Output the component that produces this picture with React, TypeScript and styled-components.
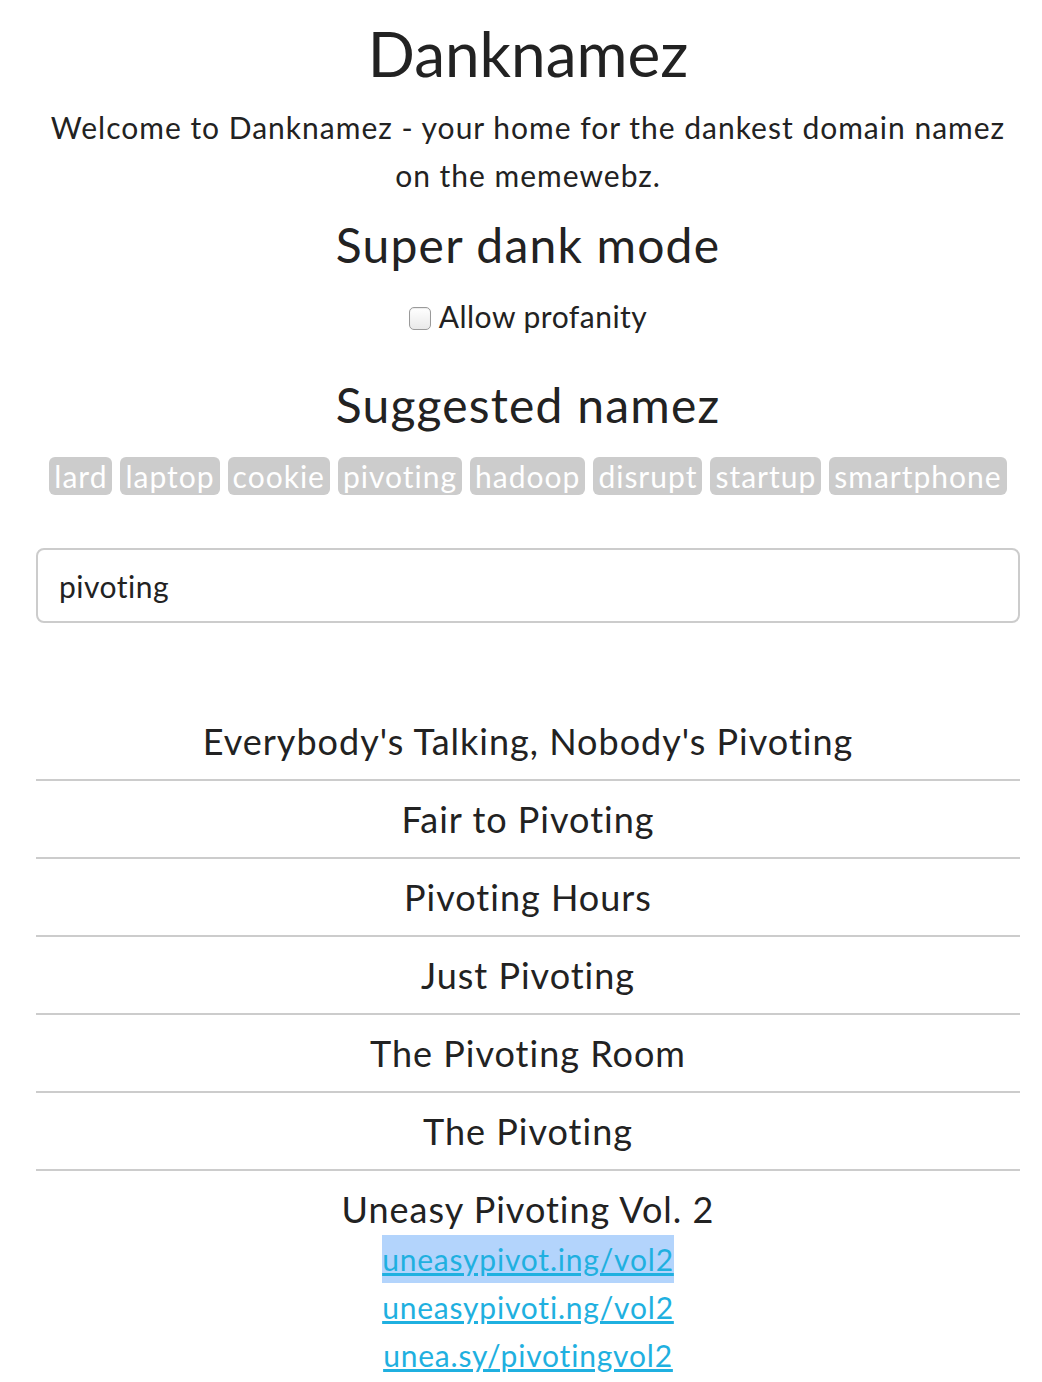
import { useState } from "react";
import styled, { createGlobalStyle } from "styled-components";

const GlobalStyle = createGlobalStyle`
    body {
        margin: 0;
        background: #fff;
        color: #222;
        font-family: Lato, "Liberation Sans", sans-serif;
    }
`

const Page = styled.div`
    padding: 22px 22px 40px 36px;
    text-align: center;
`

const Title = styled.h1`
    font-size: 62px;
    font-weight: 400;
    line-height: 62px;
    margin: 0;
`

const Lead = styled.p`
    font-size: 30px;
    line-height: 48px;
    letter-spacing: 1px;
    margin: 19px 0 0;
`

const Heading = styled.h2<{ gap: number }>`
    font-size: 48px;
    font-weight: 400;
    line-height: 58px;
    letter-spacing: 1.2px;
    margin: ${({ gap }) => gap}px 0 0;
`

const CheckField = styled.div`
    display: flex;
    justify-content: center;
    margin-top: 22px;
`

const CheckRow = styled.label`
    display: inline-flex;
    align-items: center;
    gap: 8px;
    font-size: 30px;
    line-height: 40px;
    letter-spacing: 0.5px;
`

const Box = styled.input`
    appearance: none;
    box-sizing: border-box;
    width: 22px;
    height: 23px;
    margin: 4px 0 0;
    border: 1.5px solid #9a9a9a;
    border-radius: 5px;
    background: linear-gradient(#fff, #e9e9e9);
    box-shadow: inset 0 1px 1px rgba(0, 0, 0, 0.08);
    &:checked {
        background: #3b99fc;
        border-color: #2a7fd8;
    }
`

const Tags = styled.div`
    display: flex;
    flex-wrap: wrap;
    justify-content: center;
    gap: 8px;
    margin-top: 23px;
`

const Tag = styled.span`
    background: #ccc;
    color: #fff;
    border-radius: 6px;
    padding: 0 5px;
    font-size: 30px;
    line-height: 38px;
    letter-spacing: 1px;
`

const Search = styled.input`
    display: block;
    box-sizing: border-box;
    width: 100%;
    height: 75px;
    margin: 53px 0 80px;
    padding: 0 21px;
    border: 2px solid #ccc;
    border-radius: 8px;
    font-family: inherit;
    font-size: 30px;
    letter-spacing: 0.5px;
    color: #222;
    outline: none;
`

const List = styled.ul`
    list-style: none;
    margin: 0;
    padding: 0;
`

const Item = styled.li<{ last?: boolean }>`
    font-size: 36px;
    letter-spacing: 1px;
    border-bottom: ${({ last }) => last ? 'none' : '2px solid #ccc'};
`

const Name = styled.div`
    line-height: 76px;
`

const Links = styled.div`
    display: flex;
    flex-direction: column;
    align-items: center;
    margin-top: -12px;
`

const Domain = styled.a<{ selected?: boolean }>`
    font-size: 30px;
    line-height: 48px;
    letter-spacing: 0.8px;
    color: #1fb0e0;
    text-decoration: underline;
    background: ${({ selected }) => selected ? '#b3d4fc' : 'transparent'};
`

const tags = ["lard", "laptop", "cookie", "pivoting", "hadoop", "disrupt", "startup", "smartphone"]

const names = [
    "Everybody's Talking, Nobody's Pivoting",
    "Fair to Pivoting",
    "Pivoting Hours",
    "Just Pivoting",
    "The Pivoting Room",
    "The Pivoting",
]

const domains = ["uneasypivot.ing/vol2", "uneasypivoti.ng/vol2", "unea.sy/pivotingvol2"]

const App = () => {
    const [query, setQuery] = useState("pivoting")
    const [profane, setProfane] = useState(false)

    return (
        <Page>
            <GlobalStyle />
            <Title>Danknamez</Title>
            <Lead>Welcome to Danknamez - your home for the dankest domain namez on the memewebz.</Lead>
            <Heading gap={17}>Super dank mode</Heading>
            <CheckField>
                <CheckRow>
                    <Box type="checkbox" checked={profane} onChange={() => setProfane(p => !p)} />
                    Allow profanity
                </CheckRow>
            </CheckField>
            <Heading gap={40}>Suggested namez</Heading>
            <Tags>
                {tags.map(t => <Tag key={t}>{t}</Tag>)}
            </Tags>
            <Search value={query} onChange={e => setQuery(e.target.value)} />
            <List>
                {names.map(n => (
                    <Item key={n}><Name>{n}</Name></Item>
                ))}
                <Item last>
                    <Name>Uneasy Pivoting Vol. 2</Name>
                    <Links>
                        {domains.map((d, i) => (
                            <Domain key={d} href="#" selected={i === 0}>{d}</Domain>
                        ))}
                    </Links>
                </Item>
            </List>
        </Page>
    )
}

export default App;
